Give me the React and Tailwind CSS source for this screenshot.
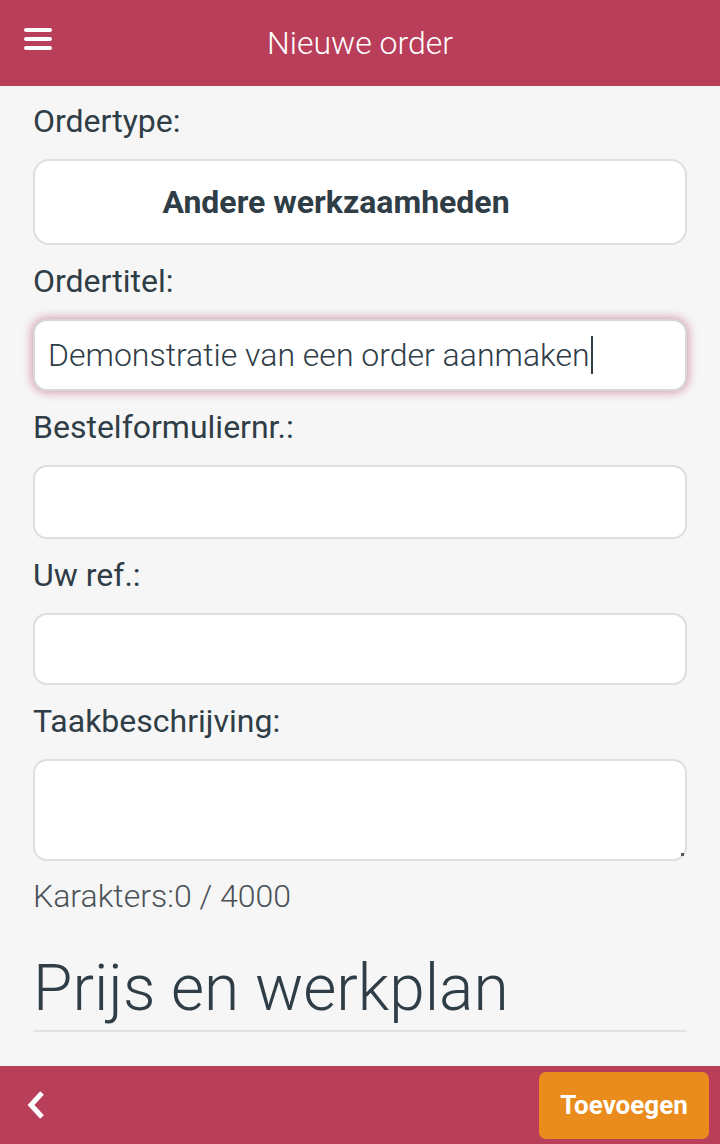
import React from "react";

function Label({ children, first }) {
  return (
    <div className={(first ? "mt-[17px]" : "mt-[18px]") + " mb-[20px] h-[36px] leading-[36px] text-[32px] text-[#2f3d47]"}>
      {children}
    </div>
  );
}

export default function App() {
  return (
    <div className="w-[720px] h-[1144px] flex flex-col bg-[#f6f6f6] overflow-hidden" style={{ fontFamily: "Roboto, 'Open Sans', sans-serif" }}>
      <header className="h-[86px] shrink-0 bg-[#b93e5a] flex items-center justify-center relative">
        <div className="absolute left-[24px] top-[28px] flex flex-col gap-[5px]">
          <span className="block w-[28px] h-[4px] rounded-full bg-white"></span>
          <span className="block w-[28px] h-[4px] rounded-full bg-white"></span>
          <span className="block w-[28px] h-[4px] rounded-full bg-white"></span>
        </div>
        <h1 className="text-white text-[32px] font-light">Nieuwe order</h1>
      </header>

      <main className="flex-1 px-[33px] flex flex-col">
        <Label first>Ordertype:</Label>
        <div className="h-[86px] rounded-[16px] border-2 border-[#dedede] bg-white flex items-center justify-center pr-[48px]">
          <span className="text-[32px] font-bold text-[#2f3d47]">Andere werkzaamheden</span>
        </div>

        <Label>Ordertitel:</Label>
        <div className="h-[72px] rounded-[14px] border-2 border-[#d8d8d8] bg-white flex items-center pl-[13px] shadow-[0_0_9px_2px_rgba(185,62,90,0.45)]">
          <span className="text-[32px] font-light text-[#2f3d47]">Demonstratie van een order aanmaken</span>
          <span className="inline-block w-[2px] h-[38px] bg-[#2f3d47] ml-[1px]"></span>
        </div>

        <Label>Bestelformuliernr.:</Label>
        <div className="h-[74px] rounded-[14px] border-2 border-[#dedede] bg-white"></div>

        <Label>Uw ref.:</Label>
        <div className="h-[72px] rounded-[14px] border-2 border-[#dedede] bg-white"></div>

        <Label>Taakbeschrijving:</Label>
        <div className="h-[102px] rounded-[14px] border-2 border-[#dedede] bg-white relative">
          <span className="absolute right-[1px] bottom-[3px] w-[3px] h-[3px] bg-[#555]"></span>
        </div>

        <div className="mt-[17px] h-[36px] leading-[36px] text-[32px] font-light text-[#4a5258]">Karakters:0 / 4000</div>

        <h2 className="mt-[39px] text-[64px] leading-[72px] font-light text-[#2f3d47]">Prijs en werkplan</h2>
        <div className="mt-[5px] h-[2px] bg-[#e2e2e2]"></div>
      </main>

      <footer className="h-[78px] shrink-0 bg-[#b93e5a] flex items-center justify-between pl-[26px] pr-[11px]">
        <svg width="22" height="30" viewBox="0 0 22 30">
          <path d="M16 3 L5 15 L16 27" stroke="white" strokeWidth="5" fill="none" strokeLinejoin="miter" />
        </svg>
        <button className="w-[170px] h-[67px] rounded-[7px] bg-[#ea8c1d] text-white text-[26px] font-bold">
          Toevoegen
        </button>
      </footer>
    </div>
  );
}
